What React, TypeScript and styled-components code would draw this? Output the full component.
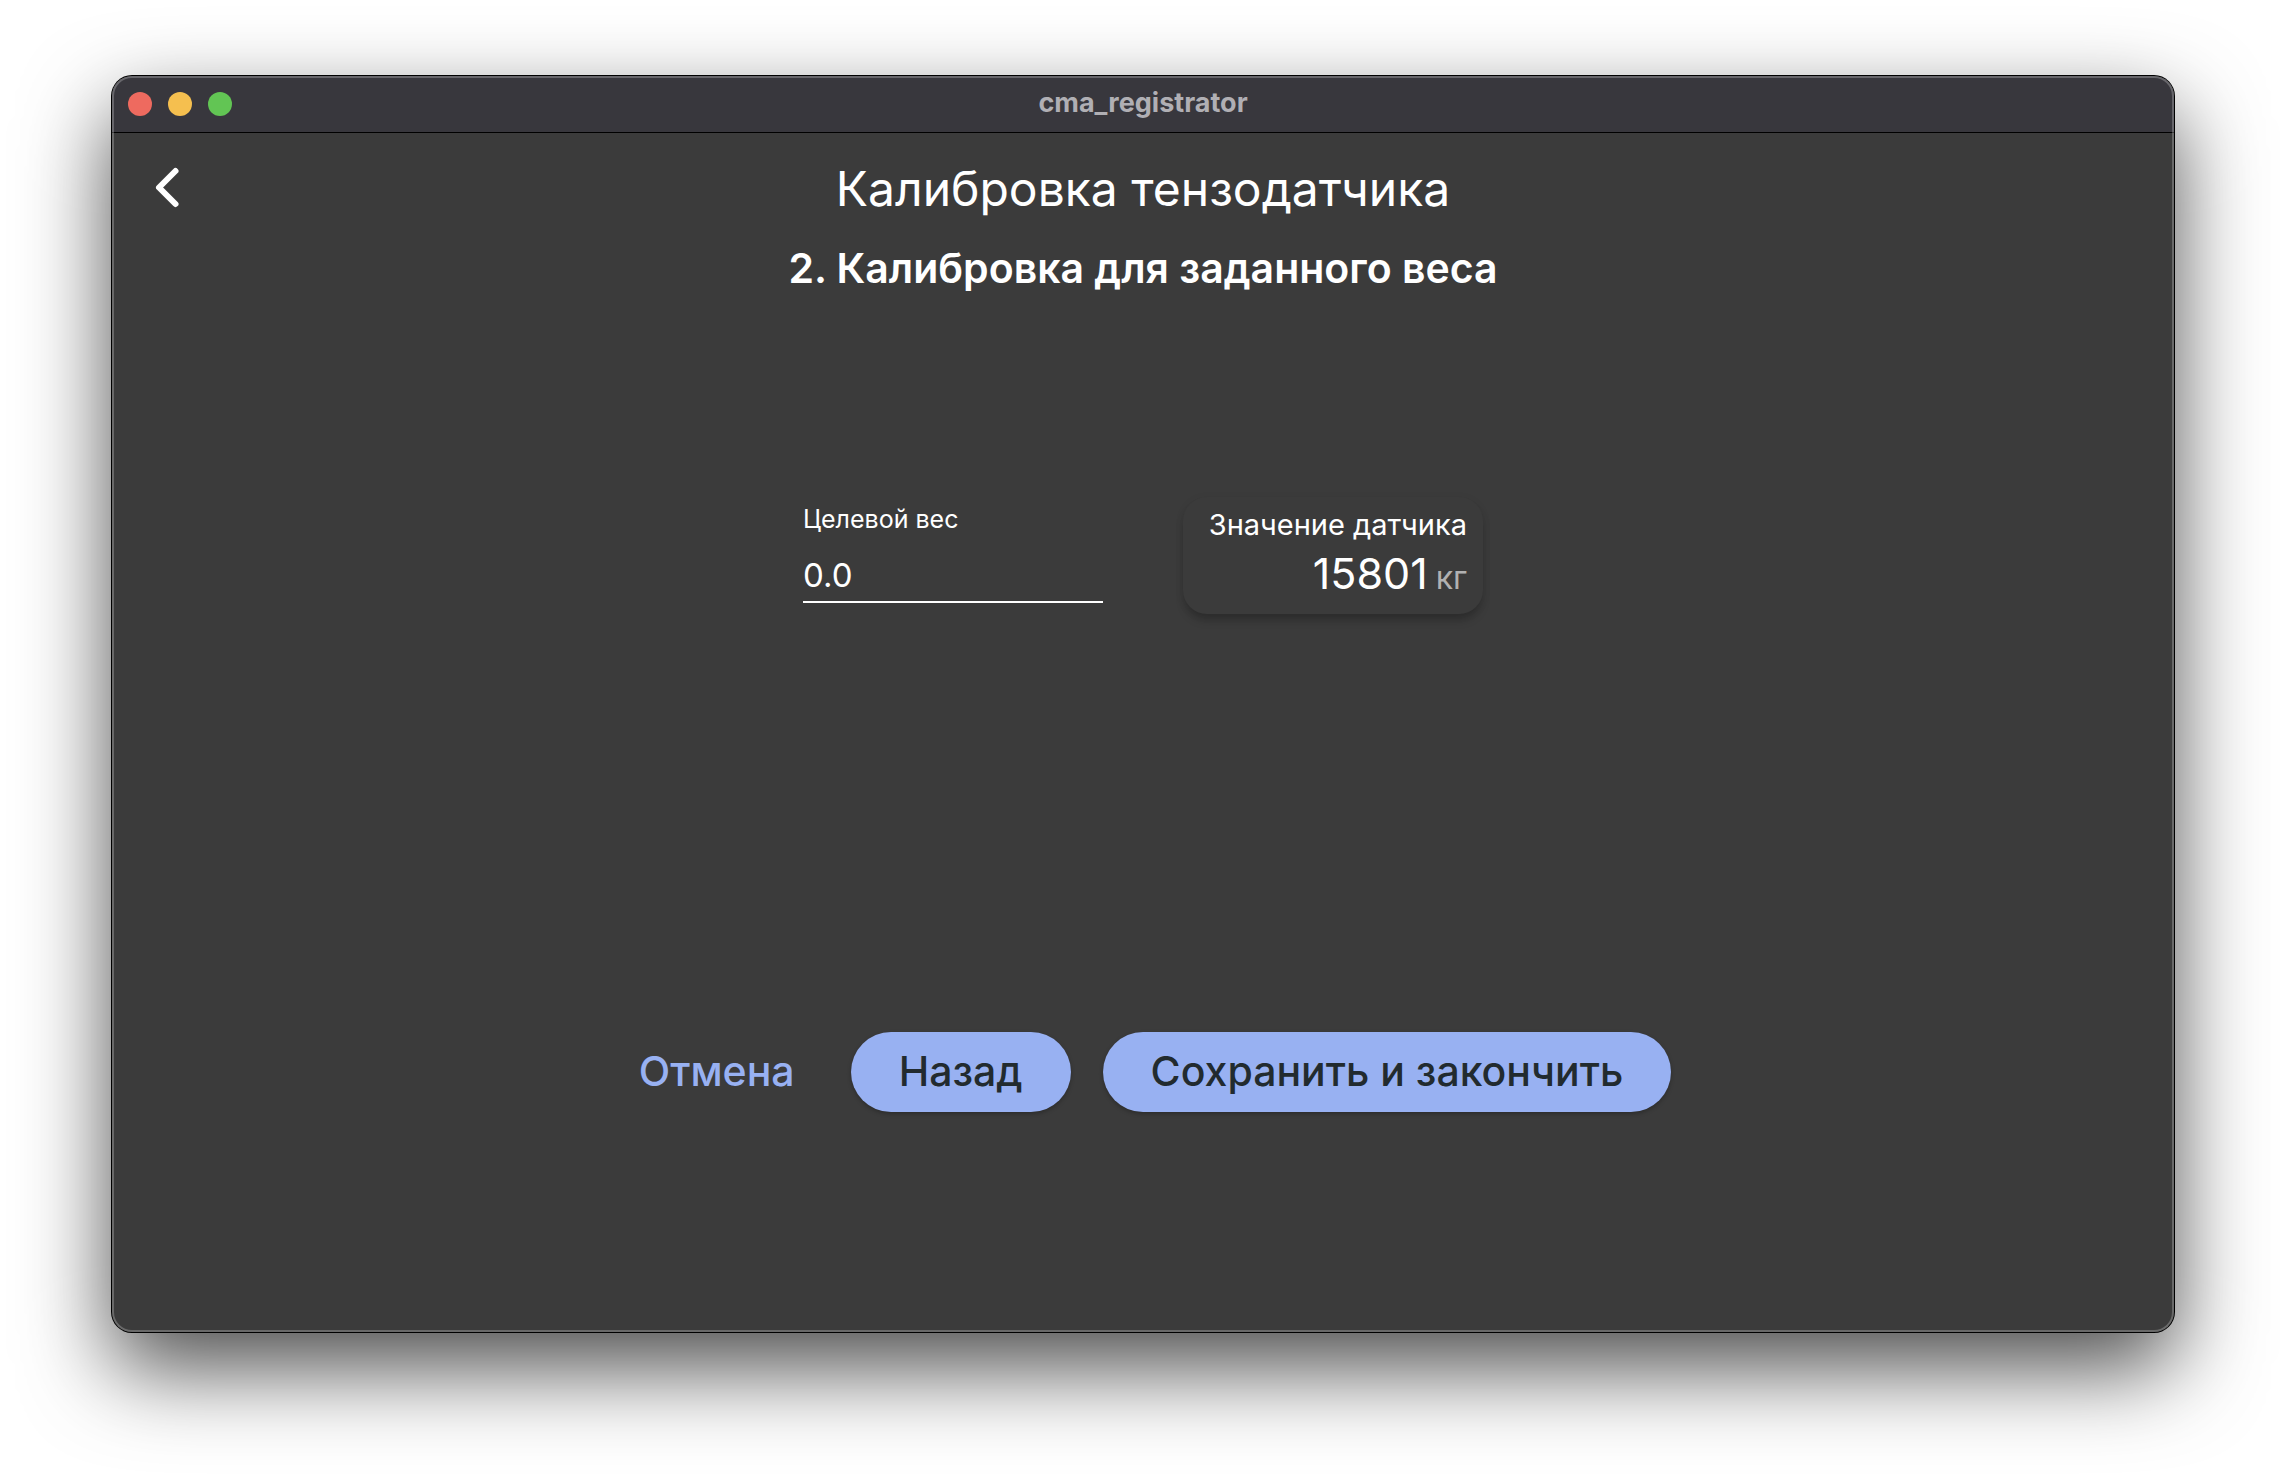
import React, { useState } from "react";
import styled, { createGlobalStyle } from "styled-components";

const GlobalStyle = createGlobalStyle`
  *, *::before, *::after { box-sizing: border-box; }
  body {
    margin: 0;
    background: #ffffff;
    color: #ffffff;
    font-family: Inter, "Noto Sans", sans-serif;
  }
  h1, h2, p { margin: 0; }
  button, input { font-family: inherit; }
`;

const Desktop = styled.div`
  display: flex;
  min-height: 100vh;
  padding: 76px 112px 148px;
`;

const AppWindow = styled.section`
  position: relative;
  flex: 1;
  display: flex;
  flex-direction: column;
  background: #3b3b3b;
  border-radius: 20px;
  box-shadow: 0 0 0 1px #000000, 0 36px 88px rgba(0, 0, 0, 0.7);

  &::after {
    content: "";
    position: absolute;
    inset: 0;
    border-radius: 20px;
    box-shadow: inset 0 0 0 2px rgba(255, 255, 255, 0.24);
    pointer-events: none;
  }
`;

const TitleBar = styled.header`
  display: grid;
  grid-template-columns: 1fr auto 1fr;
  align-items: center;
  height: 57px;
  padding: 0 16px;
  background: #38373d;
  border-bottom: 1px solid #000000;
  border-radius: 20px 20px 0 0;
`;

const Lights = styled.div`
  display: flex;
  gap: 16px;
`;

const Light = styled.button<{ $color: string }>`
  width: 24px;
  height: 24px;
  padding: 0;
  border: 0;
  border-radius: 50%;
  background: ${(p) => p.$color};
`;

const WindowTitle = styled.p`
  padding-bottom: 2px;
  font-size: 27px;
  line-height: 32px;
  font-weight: 700;
  color: #b0afb4;
`;

const AppBar = styled.div`
  display: grid;
  grid-template-columns: 1fr auto 1fr;
  align-items: center;
  height: 112px;
  padding: 0 16px;
`;

const BackButton = styled.button`
  display: flex;
  align-items: center;
  justify-content: center;
  width: 80px;
  height: 80px;
  padding: 0;
  border: 0;
  background: none;
  color: inherit;
`;

const PageTitle = styled.h1`
  font-size: 48px;
  line-height: 64px;
  font-weight: 400;
`;

const StepTitle = styled.h2`
  font-size: 41px;
  line-height: 46px;
  font-weight: 600;
  text-align: center;
`;

const Main = styled.main`
  flex: 1;
  display: flex;
  flex-direction: column;
`;

const Region = styled.div`
  flex: 1;
  display: flex;
  align-items: center;
  justify-content: center;
`;

const FormRow = styled.div`
  display: grid;
  grid-template-columns: 300px 300px;
  gap: 80px;
`;

const Field = styled.div`
  display: flex;
  flex-direction: column;
  gap: 24px;
  padding-top: 16px;
`;

const FieldLabel = styled.label`
  font-size: 25px;
  line-height: 28px;
`;

const FieldInput = styled.input`
  width: 100%;
  height: 46px;
  padding: 0 0 8px;
  border: 0;
  border-bottom: 2px solid #ffffff;
  border-radius: 0;
  outline: 0;
  background: transparent;
  color: inherit;
  font-size: 33px;
  line-height: 36px;
`;

const SensorCard = styled.div`
  display: flex;
  flex-direction: column;
  gap: 8px;
  margin-top: 8px;
  padding: 12px 16px;
  border-radius: 24px;
  background: #3b3b3b;
  text-align: right;
  box-shadow: 0 8px 10px -2px rgba(0, 0, 0, 0.22), 0 2px 8px rgba(0, 0, 0, 0.08);
`;

const SensorLabel = styled.p`
  font-size: 29px;
  line-height: 32px;
  white-space: nowrap;
`;

const SensorValue = styled.p`
  font-size: 43px;
  line-height: 48px;
`;

const Unit = styled.span`
  margin-left: 8px;
  font-size: 32px;
  color: #b1b1b1;
`;

const Actions = styled.div`
  display: flex;
  gap: 32px;
`;

const Button = styled.button<{ $filled?: boolean }>`
  height: 80px;
  padding: 0 ${(p) => (p.$filled ? 48 : 24)}px 2px;
  border: 0;
  border-radius: 40px;
  background: ${(p) => (p.$filled ? "#98b1f2" : "transparent")};
  color: ${(p) => (p.$filled ? "#222b2f" : "#98b1f2")};
  box-shadow: ${(p) => (p.$filled ? "0 2px 4px rgba(0, 0, 0, 0.25)" : "none")};
  font-size: 41px;
  line-height: 48px;
  font-weight: 500;
  white-space: nowrap;
`;

const lights = [
  { name: "Закрыть", color: "#ee6a5f" },
  { name: "Свернуть", color: "#f5bf4f" },
  { name: "Развернуть", color: "#62c554" },
];

export default function App() {
  const [target, setTarget] = useState("0.0");

  return (
    <>
      <GlobalStyle />
      <Desktop>
        <AppWindow>
          <TitleBar>
            <Lights>
              {lights.map((l) => (
                <Light key={l.name} type="button" aria-label={l.name} $color={l.color} />
              ))}
            </Lights>
            <WindowTitle>cma_registrator</WindowTitle>
          </TitleBar>
          <Main>
            <AppBar>
              <BackButton type="button" aria-label="Назад">
                <svg width="48" height="48" viewBox="0 0 48 48" fill="none" stroke="currentColor" strokeWidth="6" strokeLinecap="round" strokeLinejoin="round">
                  <path d="M31.5 6 L15 22.5 L31.5 39" />
                </svg>
              </BackButton>
              <PageTitle>Калибровка тензодатчика</PageTitle>
            </AppBar>
            <StepTitle>2. Калибровка для заданного веса</StepTitle>
            <Region>
              <FormRow>
                <Field>
                  <FieldLabel htmlFor="target-weight">Целевой вес</FieldLabel>
                  <FieldInput
                    id="target-weight"
                    type="text"
                    inputMode="decimal"
                    value={target}
                    onChange={(e) => setTarget(e.target.value)}
                  />
                </Field>
                <SensorCard>
                  <SensorLabel>Значение датчика</SensorLabel>
                  <SensorValue>
                    15801<Unit>кг</Unit>
                  </SensorValue>
                </SensorCard>
              </FormRow>
            </Region>
            <Region>
              <Actions>
                <Button type="button">Отмена</Button>
                <Button type="button" $filled>Назад</Button>
                <Button type="button" $filled>Сохранить и закончить</Button>
              </Actions>
            </Region>
          </Main>
        </AppWindow>
      </Desktop>
    </>
  );
}
